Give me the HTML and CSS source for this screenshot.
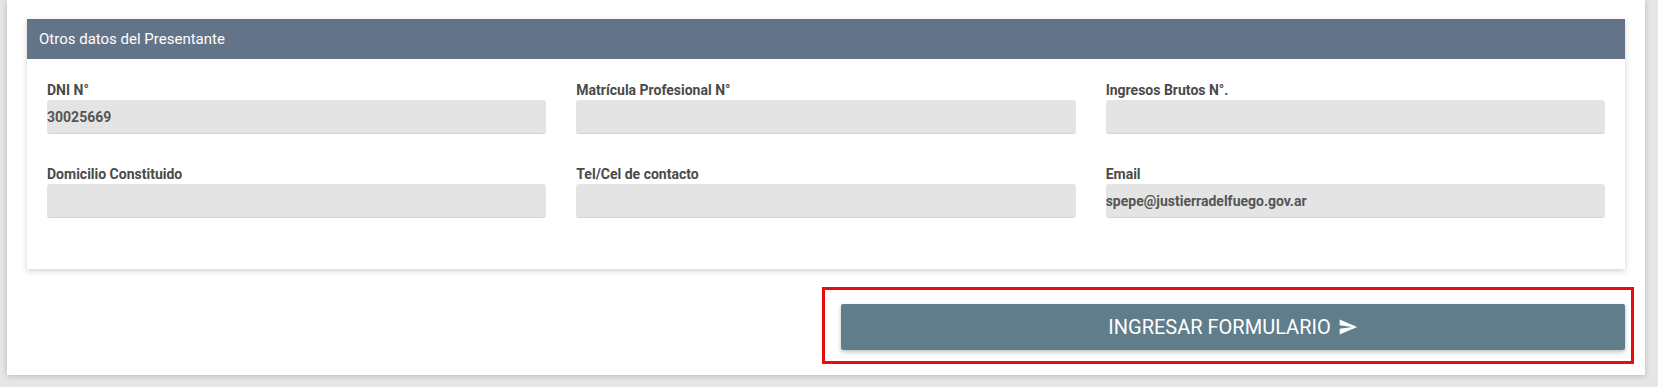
FILE: index.html
```html
<!DOCTYPE html>
<html>
<head>
    <link rel="stylesheet" href="styles.css">
</head>
<body>
    <div class="page-card">
        <div class="panel">
            <div class="panel-heading">Otros datos del Presentante</div>
            <div class="panel-body">
                <div class="field">
                    <label>DNI N°</label>
                    <div class="input">30025669</div>
                </div>
                <div class="field">
                    <label>Matrícula Profesional N°</label>
                    <div class="input"></div>
                </div>
                <div class="field">
                    <label>Ingresos Brutos N°.</label>
                    <div class="input"></div>
                </div>
                <div class="field">
                    <label>Domicilio Constituido</label>
                    <div class="input"></div>
                </div>
                <div class="field">
                    <label>Tel/Cel de contacto</label>
                    <div class="input"></div>
                </div>
                <div class="field">
                    <label>Email</label>
                    <div class="input">spepe@justierradelfuego.gov.ar</div>
                </div>
            </div>
        </div>
        <div class="actions">
            <div class="highlight">
                <button class="submit-button">
                    INGRESAR FORMULARIO
                    <svg viewBox="0 0 24 24" width="20" height="20"><path d="M2.01 21L23 12 2.01 3 2 10l15 2-15 2z" fill="#fff"/></svg>
                </button>
            </div>
        </div>
    </div>
</body>
</html>
```

FILE: styles.css
```css
body {
    margin: 0;
    padding: 0 13px 11px 7px;
    background-color: #e6e6e6;
    font-family: 'Roboto', 'Liberation Sans', sans-serif;
    color: #555;
}

.page-card {
    background-color: #fff;
    padding: 19px 20px 11px 20px;
    box-shadow: 0 1px 6px rgba(0, 0, 0, 0.2);
}

.panel {
    background-color: #fff;
    box-shadow: 0 2px 6px rgba(0, 0, 0, 0.18);
}

.panel-heading {
    height: 40px;
    line-height: 40px;
    padding-left: 12px;
    background-color: #637489;
    color: #fff;
    font-size: 15px;
}

.panel-body {
    display: grid;
    grid-template-columns: 1fr 1fr 1fr;
    column-gap: 30px;
    row-gap: 32px;
    padding: 23px 20px 51px 20px;
}

.field label {
    display: block;
    font-size: 14px;
    font-weight: bold;
    line-height: 17px;
    margin-bottom: 1px;
    color: #4a4a4a;
}

.input {
    height: 33px;
    line-height: 34px;
    background-color: #e4e4e4;
    border-bottom: 1px solid #d4d4d4;
    border-radius: 3px;
    font-size: 14px;
    font-weight: bold;
    color: #555;
}

.actions {
    display: flex;
    justify-content: flex-end;
    margin-top: 18px;
    margin-right: -9px;
}

.highlight {
    border: 3px solid #e50d0d;
    padding: 14px 6px 11px 16px;
}

.submit-button {
    display: flex;
    align-items: center;
    justify-content: center;
    gap: 7px;
    width: 784px;
    height: 46px;
    background-color: #607d8b;
    color: #fff;
    border: none;
    border-radius: 2px;
    font-family: 'Roboto', sans-serif;
    font-size: 20px;
    box-shadow: 0 2px 4px rgba(0, 0, 0, 0.25);
    cursor: pointer;
}

.submit-button svg {
    display: block;
}
```
